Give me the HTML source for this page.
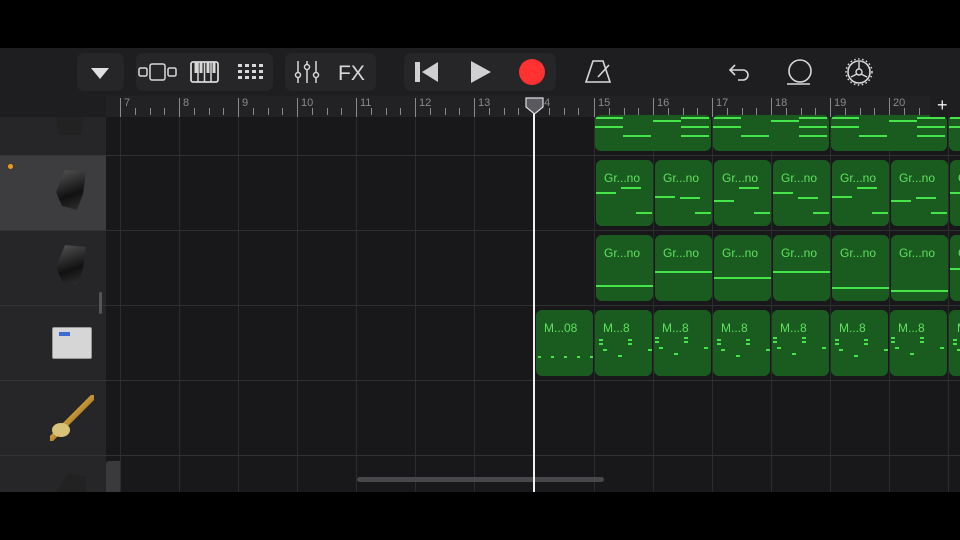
<!DOCTYPE html>
<html><head><meta charset="utf-8"><style>
*{margin:0;padding:0;box-sizing:border-box}
body{width:960px;height:540px;background:#000;position:relative;overflow:hidden;font-family:"Liberation Sans",sans-serif}
.a{position:absolute}
.btn{position:absolute;top:53px;height:38px;background:#262628;border-radius:7px}
.rg{position:absolute;background:#1a5c1f;border-radius:6px;overflow:hidden}
.rg span{position:absolute;top:11px;left:8px;color:#5fe05f;font-size:12px}
.n{position:absolute;height:2px;background:#45e44a}
.num{position:absolute;top:97px;color:#8a8a8e;font-size:11px}
</style></head><body>
<div class="a" style="left:0;top:48px;width:960px;height:49px;background:#1e1e20"></div>
<div class="btn" style="left:77px;width:47px"></div>
<div class="btn" style="left:136px;width:137px"></div>
<div class="btn" style="left:285px;width:91px"></div>
<div class="btn" style="left:404px;width:152px"></div>
<svg class="a" style="left:0;top:48px" width="960" height="48" fill="none" stroke="#d8d8d8" stroke-width="2">
<path d="M91 20 L109 20 L100 31 Z" fill="#e0e0e0" stroke="none"/>
<rect x="139" y="20" width="8" height="8" rx="1.5" stroke-width="1.5"/><rect x="150" y="16" width="15" height="16" rx="2" stroke-width="1.5"/><rect x="168" y="20" width="8" height="8" rx="1.5" stroke-width="1.5"/>
<rect x="191" y="14" width="27" height="20" rx="2" stroke-width="1.8"/><path d="M198 14v20M204.5 14v20M211 14v20" stroke-width="1.5"/><path d="M196 14v11M201 14v11M208 14v11M214 14v11" stroke-width="3"/>
<g fill="#d8d8d8" stroke="none"><rect x="238" y="16" width="4" height="3"/><rect x="245" y="16" width="4" height="3"/><rect x="252" y="16" width="4" height="3"/><rect x="259" y="16" width="4" height="3"/><rect x="238" y="22" width="4" height="3"/><rect x="245" y="22" width="4" height="3"/><rect x="252" y="22" width="4" height="3"/><rect x="259" y="22" width="4" height="3"/><rect x="238" y="28" width="4" height="3"/><rect x="245" y="28" width="4" height="3"/><rect x="252" y="28" width="4" height="3"/><rect x="259" y="28" width="4" height="3"/></g>
<path d="M298 13v22M307 13v22M316 13v22" stroke-width="1.5"/><circle cx="298" cy="27" r="2.5" fill="#1e1e20" stroke-width="1.5"/><circle cx="307" cy="19" r="2.5" fill="#1e1e20" stroke-width="1.5"/><circle cx="316" cy="27" r="2.5" fill="#1e1e20" stroke-width="1.5"/>
<text x="338" y="32" fill="#d8d8d8" stroke="none" font-size="21" font-family="Liberation Sans">FX</text>
<path d="M415 14h5v20h-5zM438 14v20L422 24Z" fill="#d0d0d0" stroke="none"/>
<path d="M471 13v22l20-11Z" fill="#d0d0d0" stroke="none"/>
<circle cx="532" cy="24" r="13" fill="#ff3131" stroke="none"/>
<path d="M586 34h24l-7-21h-10zM598 29l11-12" stroke-width="1.6"/>
<path d="M735 17l-5 5 5 5M730 22h13a5 5 0 0 1 0 10h-5" stroke-width="1.6"/>
<circle cx="800" cy="23" r="11" stroke-width="1.6"/><path d="M787 36h23" stroke-width="1.6"/>
<circle cx="859" cy="24" r="11" stroke-width="1.6"/><circle cx="859" cy="24" r="3" stroke-width="1.4"/><path d="M859 14v7M851 29l6-3M867 29l-6-3" stroke-width="1.4"/><circle cx="859" cy="24" r="13" stroke-width="1.5" stroke-dasharray="1.5 2.5"/>
</svg>
<div class="a" style="left:0;top:96px;width:106px;height:21px;background:#1e1e20"></div>
<div class="a" style="left:106px;top:96px;width:824px;height:21px;background:#222224"></div>
<div class="a" style="left:0;top:117px;width:106px;height:375px;background:#262628"></div>
<div class="a" style="left:0;top:155px;width:106px;height:75px;background:#3d3d40"></div>
<div class="a" style="left:8px;top:164px;width:5px;height:5px;border-radius:50%;background:#f09a1a"></div>
<div class="a" style="left:106px;top:117px;width:854px;height:375px;background:#18181a"></div>
<div id="g"></div>
<div class="a" style="left:99px;top:292px;width:3px;height:22px;background:#555;border-radius:2px"></div>
<div class="a" style="left:106px;top:461px;width:14px;height:31px;background:#3a3a3c;border-radius:3px 0 0 0"></div>
<div class="a" style="left:357px;top:477px;width:247px;height:5px;background:#48474b;border-radius:3px"></div>
<div class="a" style="left:533px;top:110px;width:2px;height:382px;background:#f0f0f0"></div>
<svg class="a" style="left:525px;top:97px" width="20" height="18"><path d="M1 1h17v9l-8.5 7L1 10Z" fill="#5a5a5e" stroke="#ddd" stroke-width="1.2"/></svg>
<div class="a" style="left:930px;top:96px;width:30px;height:21px;background:#1e1e20"></div>
<div class="a" style="left:937px;top:95px;color:#eee;font-size:18px">+</div>
<div class="a" style="left:56px;top:170px;width:30px;height:40px;background:linear-gradient(160deg,#555 0%,#111 60%,#333);clip-path:polygon(30% 0,100% 5%,90% 60%,70% 100%,20% 90%,0 55%)"></div>
<div class="a" style="left:56px;top:245px;width:30px;height:40px;background:linear-gradient(160deg,#555 0%,#111 60%,#333);clip-path:polygon(30% 0,100% 5%,90% 60%,70% 100%,20% 90%,0 55%)"></div>
<div class="a" style="left:56px;top:117px;width:28px;height:18px;background:#222;clip-path:polygon(0 0,100% 0,90% 100%,10% 100%)"></div>
<div class="a" style="left:52px;top:327px;width:40px;height:32px;background:#d6d6d6;border:1px solid #999;border-radius:2px"><div style="margin:4px 0 0 6px;width:11px;height:4px;background:#3b6ccf"></div></div>
<div class="a" style="left:50px;top:395px;width:44px;height:46px;background:linear-gradient(135deg,transparent 45%,#c89a3a 46%,#b7862a 54%,transparent 55%)"></div>
<div class="a" style="left:52px;top:423px;width:18px;height:14px;background:#d8c27a;border-radius:50%"></div>
<div class="a" style="left:56px;top:473px;width:30px;height:19px;background:#222;clip-path:polygon(40% 0,100% 20%,100% 100%,0 100%)"></div>
<script>
var g=document.getElementById('g'),h='';
var bars=[120,179,238,297,356,415,474,534,594,653,712,771,830,889,948];
for(var i=0;i<bars.length;i++){var x=bars[i];
if(x<930){
h+='<div class="a" style="left:'+x+'px;top:98px;width:1px;height:19px;background:#8a8a8e"></div>';
h+='<div class="num" style="left:'+(x+4)+'px">'+(7+i)+'</div>';
for(var k=1;k<4;k++){var tx=x+k*14.75;if(tx<928)h+='<div class="a" style="left:'+tx+'px;top:108px;width:1px;height:7px;background:#8a8a8e"></div>';}}
h+='<div class="a" style="left:'+x+'px;top:117px;width:1px;height:375px;background:#2c2c2e"></div>';}
[155,230,305,380,455].forEach(function(y){h+='<div class="a" style="left:106px;top:'+y+'px;width:854px;height:1px;background:#303032"></div>';h+='<div class="a" style="left:0;top:'+y+'px;width:106px;height:1px;background:#333"></div>';});
[595,713,831,949].forEach(function(x,j){h+='<div class="rg" style="left:'+x+'px;top:115px;width:116px;height:36px"><div class="n" style="left:0;top:2px;width:28px"></div><div class="n" style="left:0;top:11px;width:28px"></div><div class="n" style="left:28px;top:20px;width:28px"></div><div class="n" style="left:58px;top:5px;width:28px"></div><div class="n" style="left:86px;top:2px;width:28px"></div><div class="n" style="left:86px;top:11px;width:28px"></div><div class="n" style="left:86px;top:20px;width:28px"></div></div>';});
for(var i=0;i<7;i++){var x=596+i*59;
h+='<div class="rg" style="left:'+x+'px;top:160px;width:57px;height:66px"><span>Gr...no</span><div class="n" style="left:0;top:'+(32+ (i%3)*4)+'px;width:20px"></div><div class="n" style="left:25px;top:'+(27+(i%2)*10)+'px;width:20px"></div><div class="n" style="left:40px;top:52px;width:16px"></div></div>';
var ly=[50,36,42,36,52,55,33][i];
h+='<div class="rg" style="left:'+x+'px;top:235px;width:57px;height:66px"><span>Gr...no</span><div class="n" style="left:0;top:'+ly+'px;width:57px"></div></div>';}
for(var i=0;i<8;i++){var x=536+i*59;
var dots='';
if(i==0){for(var d=0;d<5;d++)dots+='<div class="n" style="left:'+(2+d*13)+'px;top:46px;width:3px"></div>';}
else for(var d=0;d<7;d++)dots+='<div class="n" style="left:'+([1,30,1,30,5,50,20][d]+(i*3)%6)+'px;top:'+([27,27,31,31,37,37,43][d]+(i%2)*2)+'px;width:4px"></div>';
h+='<div class="rg" style="left:'+x+'px;top:310px;width:57px;height:66px"><span>'+(i==0?'M...08':'M...8')+'</span>'+dots+'</div>';}
g.innerHTML=h;
</script>
</body></html>
